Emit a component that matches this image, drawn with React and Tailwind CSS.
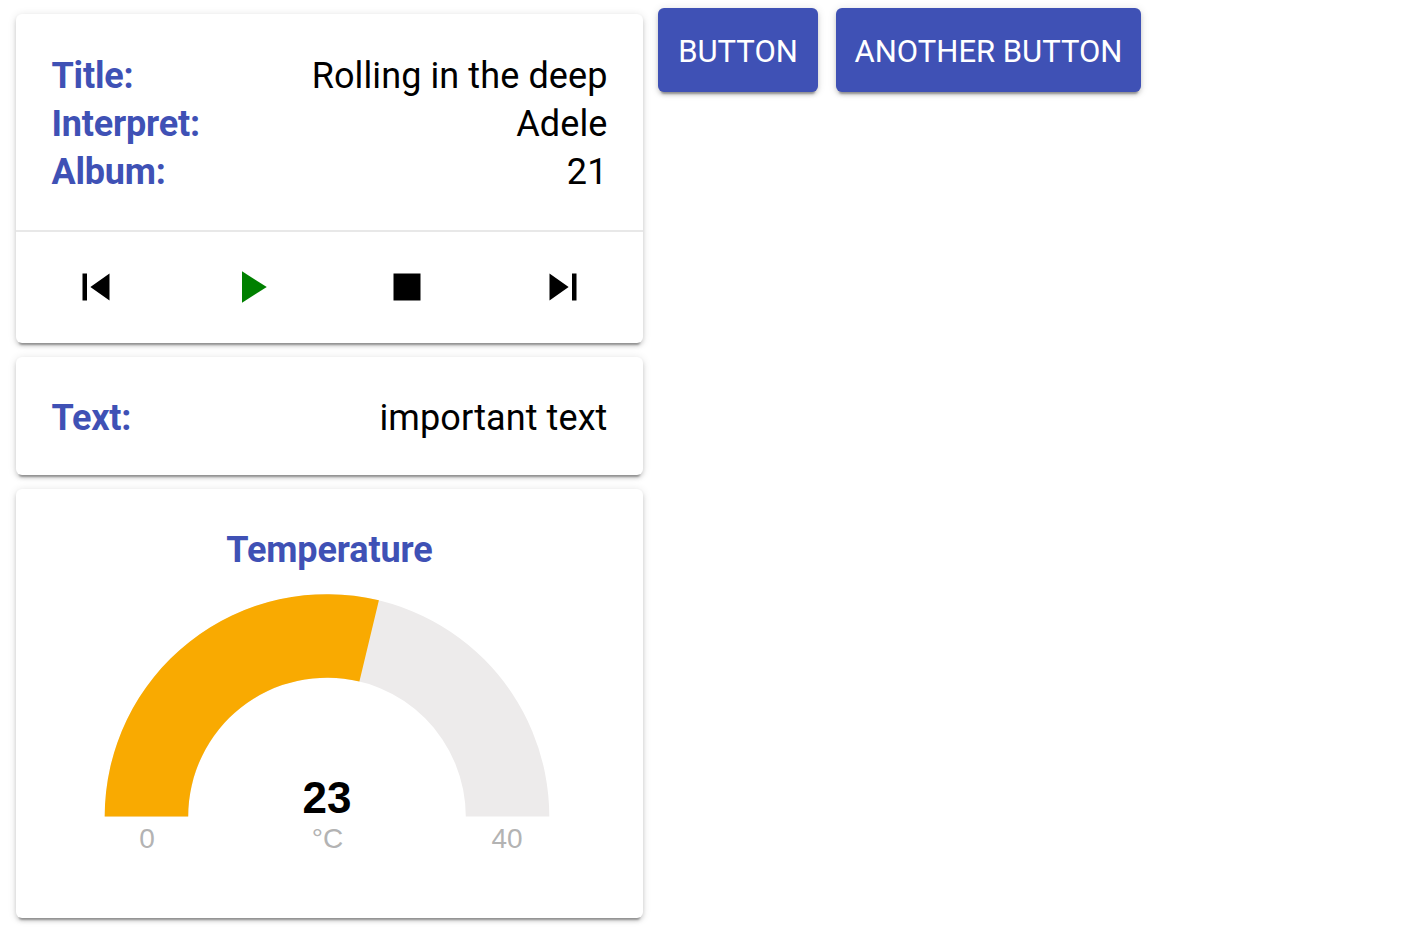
const roboto = "font-['Roboto',sans-serif]";

function Row({ label, value }) {
  return (
    <div className="flex justify-between h-12 items-center">
      <span className="font-bold text-[#3f51b5] tracking-[-0.2px]">{label}</span>
      <span className="text-black tracking-[0.1px]">{value}</span>
    </div>
  );
}

function Icon({ d, className = "fill-black" }) {
  return (
    <svg viewBox="0 0 24 24" className={`w-[54px] h-[54px] ${className}`}>
      <path d={d} />
    </svg>
  );
}

const cardClass =
  "bg-white rounded-[6px] shadow-[0_3px_4px_0_rgba(0,0,0,0.14),0_5px_2px_-3px_rgba(0,0,0,0.3),0_1px_9px_0_rgba(0,0,0,0.12)]";
const buttonClass =
  "h-[84px] pt-1 rounded-[6px] bg-[#3f51b5] text-white text-[31px] shadow-[0_3px_4px_0_rgba(0,0,0,0.14),0_5px_2px_-3px_rgba(0,0,0,0.3),0_1px_9px_0_rgba(0,0,0,0.12)]";

function Gauge() {
  return (
    <svg viewBox="0 0 627 345" className="block w-full h-[345px]">
      <path d="M88.7 243.5A222.3 222.3 0 0 1 533.3 243.5H449.8A138.8 138.8 0 0 0 172.2 243.5Z" fill="#edebeb" />
      <path d="M88.7 243.5A222.3 222.3 0 0 1 362.9 27.3L343.4 108.5A138.8 138.8 0 0 0 172.2 243.5Z" fill="#f9aa01" />
      <g fontFamily="'Liberation Sans',Arial,sans-serif" textAnchor="middle">
        <text x="311" y="240" fontSize="44" fontWeight="700" fill="#000">23</text>
        <text x="311.5" y="275" fontSize="28" fill="#b3b3b3">°C</text>
        <text x="131" y="275" fontSize="28" fill="#b3b3b3">0</text>
        <text x="491" y="275" fontSize="28" fill="#b3b3b3">40</text>
      </g>
    </svg>
  );
}

export default function App() {
  return (
    <div className={`${roboto} flex items-start bg-white min-h-[948px] pl-4 text-[36px]`}>
      <div className="w-[627px] flex flex-col gap-[14px] pt-[14px]">
        <div className={cardClass}>
          <div className="px-[35.5px] pt-[38px] pb-[34px] border-b-2 border-[#e8e8e8]">
            <Row label="Title:" value="Rolling in the deep" />
            <Row label="Interpret:" value="Adele" />
            <Row label="Album:" value="21" />
          </div>
          <div className="h-[111px] px-0.5 pb-px flex items-center justify-around">
            <Icon d="M6 6h2v12H6zm3.5 6l8.5 6V6z" />
            <Icon d="M8 5v14l11-7z" className="fill-[#008000] -translate-x-px" />
            <Icon d="M6 6h12v12H6z" />
            <Icon d="M6 18l8.5-6L6 6v12zM16 6v12h2V6h-2z" />
          </div>
        </div>
        <div className={cardClass}>
          <div className="px-[35.5px] pt-[37px] pb-[33px]">
            <Row label="Text:" value="important text" />
          </div>
        </div>
        <div className={`${cardClass} h-[429px] pt-[38px]`}>
          <div className="h-[46px] flex items-center justify-center font-bold text-[#3f51b5] tracking-[-0.1px]">
            Temperature
          </div>
          <Gauge />
        </div>
      </div>
      <div className="flex gap-[18px] ml-[15px] pt-2">
        <button className={`${buttonClass} w-[160px]`}>BUTTON</button>
        <button className={`${buttonClass} w-[305px]`}>ANOTHER BUTTON</button>
      </div>
    </div>
  );
}
